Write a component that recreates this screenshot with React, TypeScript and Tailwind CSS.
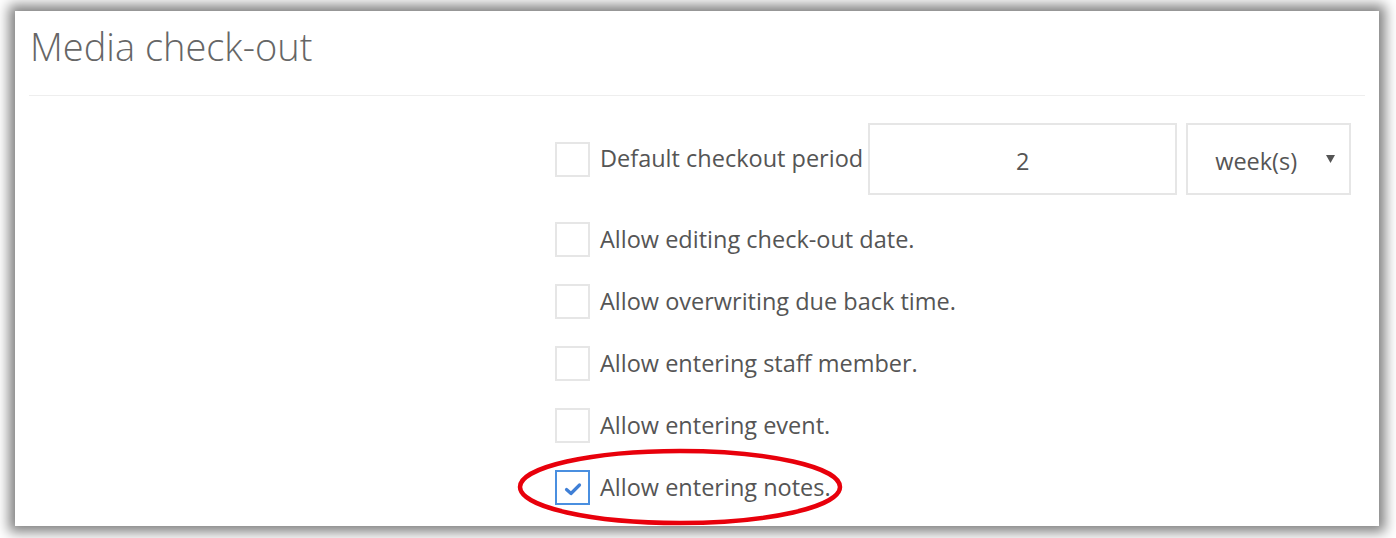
import React from "react";

const rows = [
  "Allow editing check-out date.",
  "Allow overwriting due back time.",
  "Allow entering staff member.",
  "Allow entering event.",
];

function Box({ checked = false }: { checked?: boolean }) {
  return (
    <div
      className={
        "w-[35px] h-[35px] shrink-0 flex items-center justify-center border-2 bg-white " +
        (checked ? "border-[#4a8fe0]" : "border-[#e6e6e6]")
      }
    >
      {checked && (
        <svg width="20" height="16" viewBox="0 0 20 16" className="mt-[3px]">
          <path d="M3.5 8.5 L8 12.5 L16.5 4" fill="none" stroke="#3f7fd6" strokeWidth="3.2" strokeLinecap="round" strokeLinejoin="round" />
        </svg>
      )}
    </div>
  );
}

export default function App() {
  return (
    <div
      className="w-[1396px] h-[538px] bg-white pt-[11px] pl-[15px] pr-[17px] pb-[12px] relative overflow-hidden"
      style={{ fontFamily: '"Open Sans", "Noto Sans", sans-serif' }}
    >
      <div className="w-full h-full bg-white shadow-[0_0_12px_6px_rgba(0,0,0,0.5)] relative">
        <div className="h-[84px] px-[15px]">
          <h1 className="text-[38px] leading-[70px] font-light text-[#666]">Media check-out</h1>
        </div>
        <div className="mx-[14px] border-t border-[#eeeeee]" />
        <div className="pl-[540px] pt-[27px] flex flex-col gap-[27px] text-[23.5px] text-[#555]">
          <div className="flex items-center h-[72px]">
            <Box />
            <span className="ml-[10px] whitespace-nowrap">Default checkout period</span>
            <div className="ml-[5px] w-[309px] h-[72px] shrink-0 border-2 border-[#e6e6e6] flex items-center justify-center pt-[5px] text-[#555]">
              2
            </div>
            <div className="ml-[9px] w-[165px] h-[72px] shrink-0 border-2 border-[#e6e6e6] flex items-center pt-[5px] relative">
              <span className="ml-[27px]">week(s)</span>
              <svg className="absolute right-[14px] top-[30px]" width="9" height="8" viewBox="0 0 9 8">
                <path d="M0 0 H9 L4.5 8 Z" fill="#555" />
              </svg>
            </div>
          </div>
          {rows.map((r) => (
            <div key={r} className="flex items-center h-[35px]">
              <Box />
              <span className="ml-[10px]">{r}</span>
            </div>
          ))}
          <div className="flex items-center h-[35px]">
            <Box checked />
            <span className="ml-[10px]">Allow entering notes.</span>
          </div>
        </div>
        <svg className="absolute left-[502px] top-[437px]" width="330" height="80" viewBox="0 0 330 80">
          <ellipse cx="163" cy="39" rx="160" ry="36" fill="none" stroke="#e8000b" strokeWidth="4.5" />
        </svg>
      </div>
    </div>
  );
}
